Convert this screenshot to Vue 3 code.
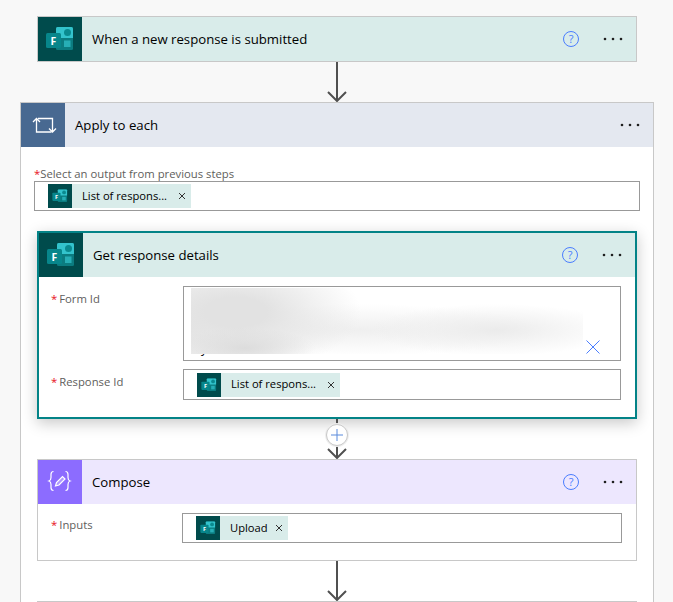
<template>
  <div class="flow">
    <!-- trigger -->
    <section class="card">
      <header class="card-head teal-head">
        <div class="card-icon forms-bg"><FormsLogo :size="44" /></div>
        <h3>When a new response is submitted</h3>
        <span class="help">?</span>
        <MoreDots />
      </header>
    </section>

    <div class="connector">
      <svg width="22" height="40" viewBox="0 0 22 40"><path d="M11 0v38M2 30l9 9 9-9" /></svg>
    </div>

    <!-- loop -->
    <section class="card loop">
      <header class="card-head loop-head">
        <div class="card-icon loop-bg">
          <svg width="44" height="44" viewBox="0 0 44 44" fill="none" stroke="#fff" stroke-width="1.300">
            <path d="M15.500 15.500V29h15M12 19l3.500-3.500L19 19" />
            <path d="M17 15.500h14.500V29M28 25.500l3.500 3.500 3.500-3.500" />
          </svg>
        </div>
        <h3>Apply to each</h3>
        <MoreDots />
      </header>

      <div class="loop-body">
        <div class="loop-field">
          <div class="top-label"><i>*</i>Select an output from previous steps</div>
          <div class="input loop-input">
            <span class="chip">
              <span class="chip-icon"><FormsLogo :size="24" /></span>
              <span class="chip-text long">List of respons...</span>
              <svg class="chip-x" width="8" height="8" viewBox="0 0 8 8"><path d="M1 1l6 6M7 1L1 7" /></svg>
            </span>
          </div>
        </div>

        <section class="card selected">
          <header class="card-head teal-head">
            <div class="card-icon forms-bg"><FormsLogo :size="44" /></div>
            <h3>Get response details</h3>
            <span class="help">?</span>
            <MoreDots />
          </header>
          <div class="card-body details-body">
            <div class="row">
              <label><i>*</i>Form Id</label>
              <div class="input form-id">
                <span class="form-id-text">y</span>
                <div class="smudge"></div>
                <svg class="clear" width="14" height="14" viewBox="0 0 14 14"><path d="M.5.5l13 13M13.500.5l-13 13" /></svg>
              </div>
            </div>
            <div class="row">
              <label><i>*</i>Response Id</label>
              <div class="input">
                <span class="chip">
                  <span class="chip-icon"><FormsLogo :size="24" /></span>
                  <span class="chip-text long">List of respons...</span>
                  <svg class="chip-x" width="8" height="8" viewBox="0 0 8 8"><path d="M1 1l6 6M7 1L1 7" /></svg>
                </span>
              </div>
            </div>
          </div>
        </section>

        <div class="connector">
          <svg width="22" height="40" viewBox="0 0 22 40"><path d="M11 0v38M2 30l9 9 9-9" /></svg>
          <span class="add">
            <svg width="12" height="12" viewBox="0 0 12 12"><path d="M6 0v12M0 6h12" /></svg>
          </span>
        </div>

        <section class="card">
          <header class="card-head compose-head">
            <div class="card-icon compose-bg">
              <svg width="44" height="44" viewBox="0 0 44 44" fill="none" stroke="#fff" stroke-width="1.200">
                <path d="M15.500 11.500c-2 0-2.500 1-2.500 3v3c0 2-.5 3-2 3.500 1.500.5 2 1.500 2 3.500v3c0 2 .5 3 2.500 3" />
                <path d="M27.500 11.500c2 0 2.500 1 2.500 3v3c0 2 .5 3 2 3.500-1.500.5-2 1.500-2 3.500v3c0 2-.5 3-2.500 3" />
                <path d="M17.500 26l1-3.500 6-6 2.500 2.500-6 6z" fill="#fff" fill-opacity="0.3" />
              </svg>
            </div>
            <h3>Compose</h3>
            <span class="help">?</span>
            <MoreDots />
          </header>
          <div class="card-body compose-body">
            <div class="row compose-row">
              <label><i>*</i>Inputs</label>
              <div class="input">
                <span class="chip">
                  <span class="chip-icon"><FormsLogo :size="24" /></span>
                  <span class="chip-text">Upload</span>
                  <svg class="chip-x" width="8" height="8" viewBox="0 0 8 8"><path d="M1 1l6 6M7 1L1 7" /></svg>
                </span>
              </div>
            </div>
          </div>
        </section>

        <div class="connector">
          <svg width="22" height="40" viewBox="0 0 22 40"><path d="M11 0v38M2 30l9 9 9-9" /></svg>
        </div>

        <section class="card next-card"></section>
      </div>
    </section>
  </div>
</template>

<script setup>
import { h } from "vue";

// Microsoft Forms mark, drawn on a 44 unit grid
const FormsLogo = (props) =>
  h("svg", { width: props.size, height: props.size, viewBox: "0 0 44 44", style: "display:block" }, [
    h("rect", { x: 18, y: 10, width: 17, height: 23, rx: 1.5, fill: "#0b7c80" }),
    h("path", { d: "M19.5 10h14a1.500 1.500 0 0 1 1.500 1.500V21H18v-9.500A1.500 1.500 0 0 1 19.500 10z", fill: "#33c3cc" }),
    h("circle", { cx: 29.5, cy: 15.5, r: 3.5, fill: "#0a8a8f" }),
    h("rect", { x: 26, y: 23.5, width: 6.5, height: 6.5, fill: "#33c3cc", opacity: 0.7 }),
    h("rect", { x: 8, y: 16, width: 15, height: 15, rx: 1.5, fill: "#07868b" }),
    h(
      "text",
      {
        x: 15.5,
        y: 27.5,
        "text-anchor": "middle",
        fill: "#fff",
        "font-size": 10.5,
        "font-weight": 700,
        "font-family": "Open Sans, sans-serif",
      },
      "F"
    ),
  ]);
FormsLogo.props = ["size"];

const MoreDots = () =>
  h("svg", { width: 20, height: 4, viewBox: "0 0 20 4", style: "display:block;flex:none" }, [
    h("circle", { cx: 2, cy: 2, r: 1.3, fill: "#1f1f1f" }),
    h("circle", { cx: 10, cy: 2, r: 1.3, fill: "#1f1f1f" }),
    h("circle", { cx: 18, cy: 2, r: 1.3, fill: "#1f1f1f" }),
  ]);
</script>

<style>
html,
body {
  margin: 0;
  background: #f8f8f8;
}
</style>

<style scoped>
.flow {
  height: 602px;
  overflow: hidden;
  padding: 16px 0 0 37px;
  box-sizing: border-box;
  font-family: "Open Sans", "Noto Sans", sans-serif;
  color: #000;
}

.card {
  width: 600px;
  box-sizing: border-box;
  border: 1px solid #c8c8c8;
  background: #fff;
}

.card-head {
  display: flex;
  align-items: center;
  height: 44px;
  padding-right: 13px;
}

.card-head h3 {
  flex: 1;
  margin: 0 0 0 10px;
  font-size: 13.2px;
  font-weight: 400;
}

.teal-head {
  background: #d9ecea;
}

.loop-head {
  background: #e4e8f0;
}

.compose-head {
  background: #ede7fe;
}

.card-icon {
  width: 44px;
  height: 44px;
  flex: none;
}

.card-icon svg {
  display: block;
}

.forms-bg {
  background: #004b4c;
}

.loop-bg {
  background: #486991;
}

.compose-bg {
  background: #8c6cff;
}

.help {
  width: 14px;
  height: 14px;
  margin-right: 24px;
  border: 1px solid #4a7dff;
  border-radius: 50%;
  color: #4a7dff;
  font-size: 11px;
  line-height: 14px;
  text-align: center;
}

.connector {
  position: relative;
  width: 600px;
  height: 40px;
  display: flex;
  justify-content: center;
}

.connector svg {
  display: block;
}

.connector > svg path {
  fill: none;
  stroke: #505050;
  stroke-width: 2;
}

.add {
  position: absolute;
  left: 289px;
  top: 5px;
  width: 20px;
  height: 20px;
  display: grid;
  place-items: center;
  border: 1px solid #c8c8c8;
  border-radius: 50%;
  background: #fff;
  box-shadow: 0 0 0 1px #eee;
}

.add path {
  stroke: #5b8bdc;
  stroke-width: 1;
  fill: none;
}

.loop {
  width: 634px;
  margin-left: -17px;
}

.loop-body {
  padding: 19px 16px 0;
}

.loop-field {
  margin: 0 -3px 20px;
}

.top-label,
.row label {
  color: #605e5c;
  font-size: 11.3px;
}

.top-label {
  line-height: 15px;
}

.top-label i,
.row label i {
  color: #e81123;
  font-style: normal;
}

.row label i {
  margin-right: 2px;
}

.input {
  position: relative;
  flex: 1;
  min-height: 29px;
  box-sizing: border-box;
  display: flex;
  align-items: center;
  padding: 0 13px;
  border: 1px solid #999;
  background: #fff;
}

.loop-input {
  height: 30px;
}

.chip {
  display: inline-flex;
  align-items: center;
  height: 24px;
  background: #d9ecea;
  font-size: 11.2px;
}

.chip-icon {
  width: 24px;
  height: 24px;
  margin-right: 10px;
  background: #004b4c;
}

.chip-text {
  padding-bottom: 2px;
  white-space: nowrap;
}

.chip-text.long {
  margin-right: 4px;
}

.chip-x {
  margin: 0 5px 0 7px;
}

.chip-x path {
  stroke: #333;
  stroke-width: 1;
  fill: none;
}

.selected {
  border: 2px solid #038387;
  box-shadow: 0 4px 14px rgba(0, 0, 0, 0.22);
}

.row {
  display: flex;
  align-items: flex-start;
}

.row label {
  width: 144px;
  flex: none;
  padding: 5px 0 0 12px;
  box-sizing: border-box;
  line-height: 15px;
}

.details-body {
  padding: 9px 14px 17px 0;
  display: flex;
  flex-direction: column;
  gap: 8px;
}

.details-body .row .input {
  height: 31px;
}

.details-body .row .form-id {
  height: 75px;
  align-items: flex-end;
  padding: 0 7px 0 17px;
}

.form-id-text {
  font-size: 12px;
  line-height: 22px;
}

.smudge {
  position: absolute;
  left: 7px;
  top: 1px;
  width: 392px;
  height: 66px;
  background:
    radial-gradient(ellipse 70px 20px at 54px 60px, #dcdcdc, rgba(220, 220, 220, 0)),
    radial-gradient(ellipse 125px 60px at 45px 24px, #e2e2e2 25%, rgba(226, 226, 226, 0)),
    radial-gradient(ellipse 60px 60px at 0 40px, #e8e8e8, rgba(232, 232, 232, 0)),
    radial-gradient(ellipse 125px 26px at 305px 42px, #ebebeb, rgba(235, 235, 235, 0)),
    radial-gradient(ellipse 180px 26px at 170px 42px, #efefef, rgba(239, 239, 239, 0)),
    #fff;
}

.clear {
  position: absolute;
  right: 20px;
  bottom: 6px;
}

.clear path {
  stroke: #4a7dff;
  stroke-width: 1;
  fill: none;
}

.compose-body {
  padding: 9px 14px 17px 0;
}

.compose-row label {
  padding: 4px 0 0 13px;
}

.compose-row .input {
  height: 30px;
}

.next-card {
  height: 44px;
  background: #e4e8f0;
}
</style>
